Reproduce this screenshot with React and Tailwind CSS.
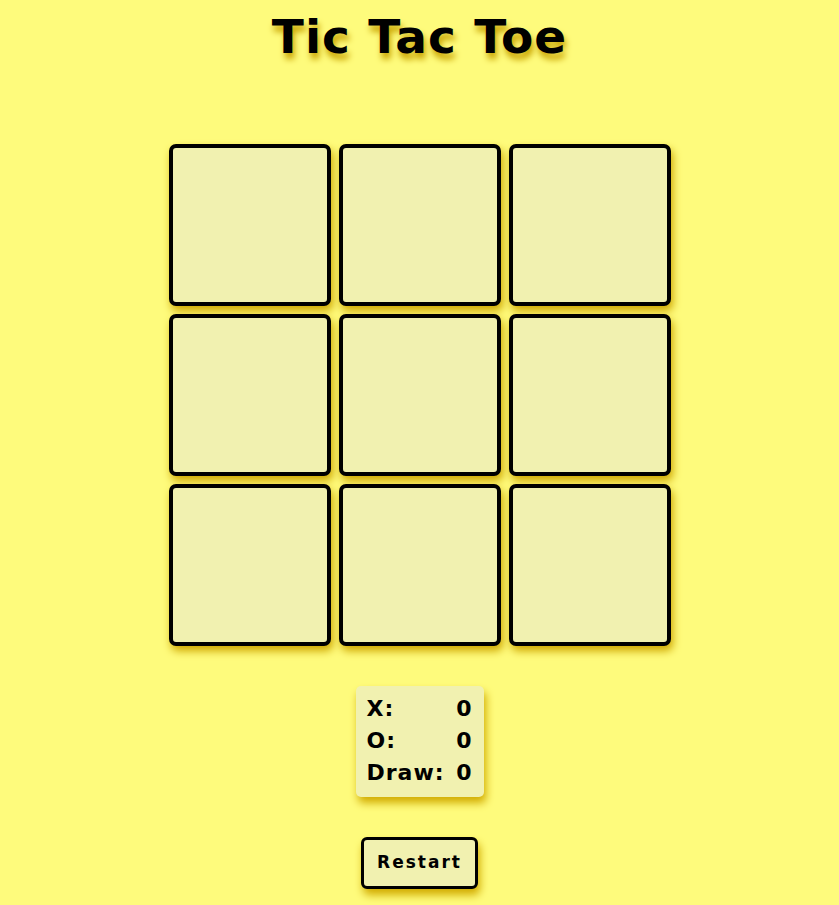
export default function App() {
  const cells = Array(9).fill(null);
  const scores = [
    ["X:", 0],
    ["O:", 0],
    ["Draw:", 0],
  ];

  return (
    <div className="min-h-[905px] bg-[#fefb7c] flex flex-col items-center font-['DejaVu_Sans',sans-serif] text-black">
      <h1 className="mt-[10px] text-[47px] leading-[54px] font-bold tracking-[1px] [text-shadow:2px_6px_6px_#c9a400]">
        Tic Tac Toe
      </h1>

      <div className="mt-[80px] grid grid-cols-[162px_162px_162px] gap-[8px]">
        {cells.map((_, i) => (
          <button
            key={i}
            className="w-[162px] h-[162px] bg-[#f1f1b0] border-4 border-black rounded-[7px] shadow-[2px_5px_8px_#cfa800]"
          />
        ))}
      </div>

      <div className="mt-[40px] w-[128px] bg-[#f1f1b0] rounded-[5px] px-[11px] pt-[7px] pb-[8px] shadow-[2px_6px_8px_#d2ac00]">
        {scores.map(([label, value]) => (
          <div key={label} className="flex justify-between items-center text-[22px] leading-[32px] font-bold tracking-[1px]">
            <span>{label}</span>
            <span>{value}</span>
          </div>
        ))}
      </div>

      <button className="mt-[40px] w-[117px] h-[52px] bg-[#f1f1b0] border-[3px] border-black rounded-[6px] text-[17px] font-bold tracking-[2px] shadow-[2px_6px_8px_#d2ac00]">
        Restart
      </button>
    </div>
  );
}
